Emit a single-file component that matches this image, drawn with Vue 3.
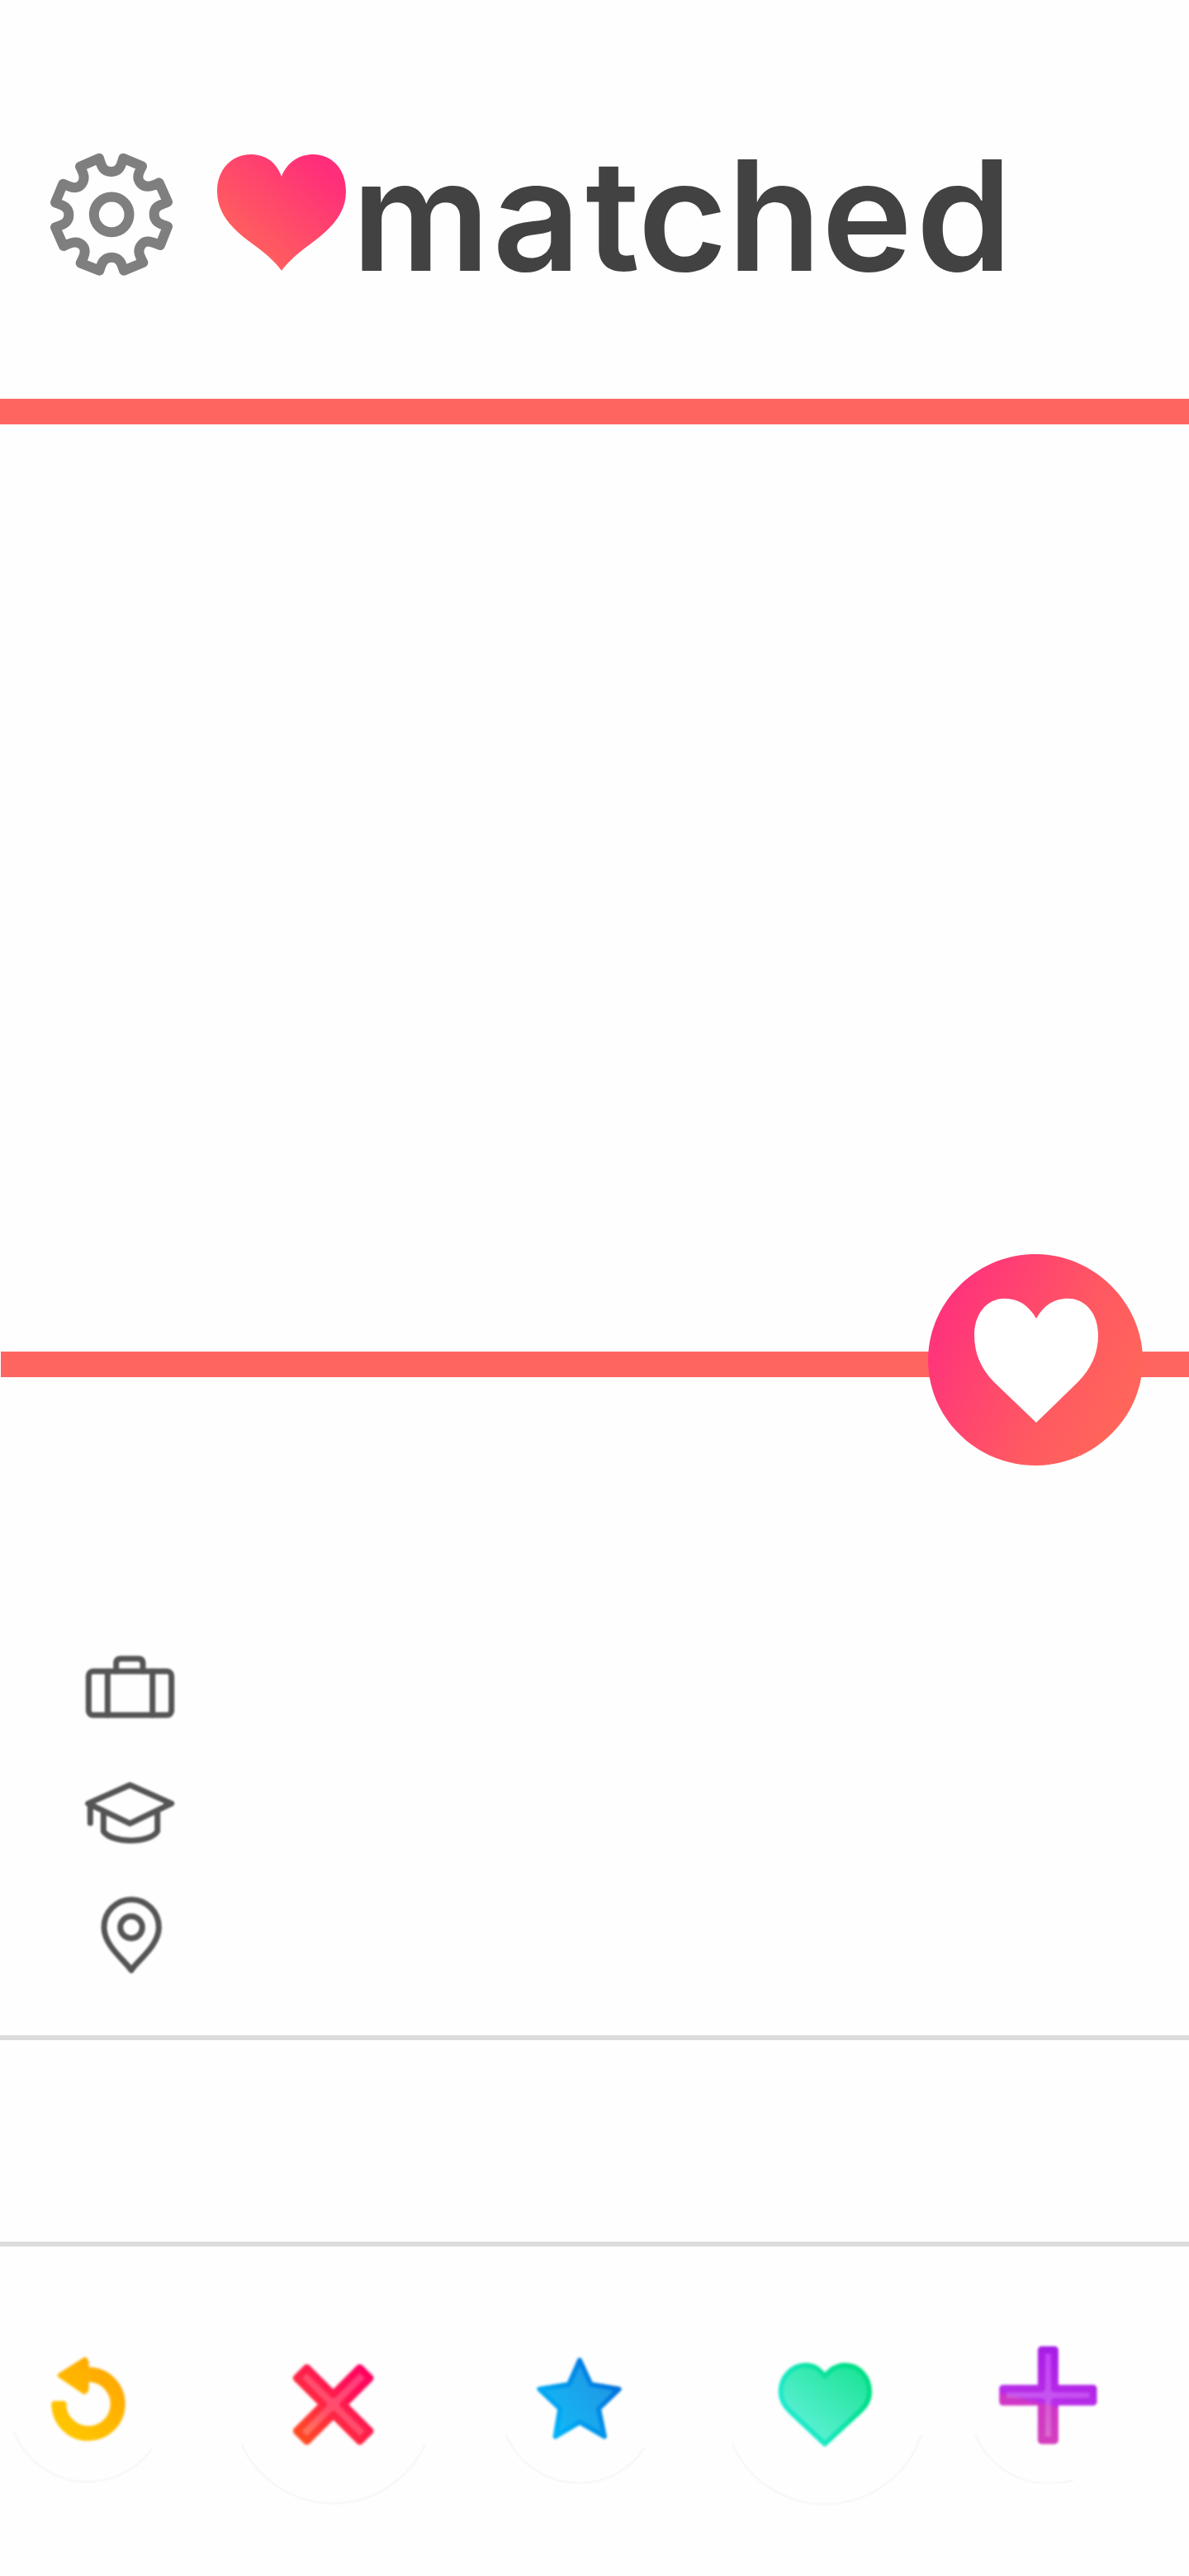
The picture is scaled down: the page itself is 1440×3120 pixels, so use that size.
<script setup>
const logoText = 'matched'
const letterX = '426 596.5 709 772.5 881 995 1109.5'
</script>

<template>
  <main class="screen">
    <header class="header">
      <svg class="gear" viewBox="60 75 450 450" fill="none" stroke="#7f7f7f" stroke-width="36" stroke-linejoin="round">
        <path d="M240 95C248 120 252 144 284 144C316 144 320 120 328 95L396 124C386 145 373 165 391 186C410 206 436 195 458 184L489 254C465 264 440 268 440 298C440 330 465 334 489 343L462 411C440 402 413 388 395 408C376 430 388 450 400 474L330 503C322 480 317 455 286 455C254 455 249 480 241 503L173 476C183 455 197 432 180 412C160 390 133 404 111 414L81 346C105 337 130 332 130 301C130 270 105 265 81 256L109 188C132 198 157 212 176 190C193 168 182 148 171 125Z" />
        <circle cx="285.500" cy="299.500" r="64" />
      </svg>
      <svg class="logo-heart" viewBox="669 80 471 423">
        <defs>
          <linearGradient id="logo-fill" x1="0.25" y1="0.8" x2="0.88" y2="0.15">
            <stop offset="0" stop-color="#ff5f5e" />
            <stop offset="1" stop-color="#ff2d7a" />
          </linearGradient>
        </defs>
        <path fill="url(#logo-fill)" d="M903 160C925 105 970 80 1018 80C1090 82 1137 135 1137 215C1137 290 1090 345 1010 404C958 442 932 466 903 502C875 466 848 442 796 404C720 350 669 292 669 215C669 135 720 82 790 80C845 80 883 108 903 160Z" />
      </svg>
      <svg class="wordmark" viewBox="423 120 817 280">
        <text :x="letterX" y="327.500">{{ logoText }}</text>
      </svg>
    </header>

    <div class="bar"></div>
    <section class="photo"></section>
    <div class="bar bar-lower">
      <svg class="match" viewBox="72 57 780 768">
        <defs>
          <linearGradient id="match-fill" x1="0.08" y1="0.3" x2="0.92" y2="0.7">
            <stop offset="0" stop-color="#ff347a" />
            <stop offset="0.65" stop-color="#ff5962" />
            <stop offset="1" stop-color="#ff655a" />
          </linearGradient>
        </defs>
        <path fill="url(#match-fill)" d="M462 57C675 57 852 235 852 442C852 650 675 825 462 825C245 825 72 650 72 442C72 235 245 57 462 57Z" />
        <path fill="#fff" d="M465 291C493 242 530 218 580 218C645 218 690 275 690 350C690 420 663 474 616 522L465 669L314 524C265 474 240 420 240 350C240 275 285 218 350 218C400 218 437 242 465 291Z" />
      </svg>
    </div>

    <section class="details">
      <svg class="detail" viewBox="60 60 360 270">
        <rect x="82" y="133" width="301" height="159" rx="16" />
        <path d="M151 133V292M314 133V292M182 133V104Q182 87 199 87H262Q279 87 279 104V133" />
      </svg>
      <svg class="detail cap" viewBox="60 510 360 270">
        <path d="M80 613L232 546L383 613L232 686ZM88 615V684M136 645V714C166 759 304 759 332 714V645" />
        <path d="M365 613H382" stroke-width="20" />
      </svg>
      <svg class="detail pin" viewBox="60 90 360 330">
        <path d="M237 379C215 344 138 291 138 223A99.500 101 0 0 1 337 223C337 291 259 344 237 379Z" />
        <circle cx="237" cy="223" r="40" />
      </svg>
    </section>
    <section class="panel"></section>

    <nav class="actions">
      <svg class="action undo" viewBox="33 348 576 576">
        <defs>
          <linearGradient id="undo-fill" gradientUnits="userSpaceOnUse" x1="230" y1="720" x2="410" y2="520">
            <stop offset="0" stop-color="#ffc500" />
            <stop offset="1" stop-color="#ffa800" />
          </linearGradient>
        </defs>
        <path class="ring" d="M50 735A288 288 0 0 0 552 798" />
        <g class="glyph">
          <path d="M214 634A107 107 0 1 0 322 528" fill="none" stroke="url(#undo-fill)" stroke-width="54" />
          <path d="M188 645V634Q188 624 198 624H231Q241 624 241 634V645Z" fill="#ffc200" />
          <path d="M217 531L308 473Q316 477 315 495V567Q317 588 306 592Z" fill="url(#undo-fill)" stroke="url(#undo-fill)" stroke-width="16" stroke-linejoin="round" />
        </g>
      </svg>
      <svg class="action nope" viewBox="0 -93 738 738">
        <defs>
          <linearGradient id="nope-fill" gradientUnits="userSpaceOnUse" x1="-130" y1="0" x2="130" y2="0">
            <stop offset="0" stop-color="#ff705c" />
            <stop offset="0.35" stop-color="#ff5269" />
            <stop offset="1" stop-color="#ff3d7e" />
          </linearGradient>
          <linearGradient id="nope-edge" gradientUnits="userSpaceOnUse" x1="-165" y1="0" x2="165" y2="0">
            <stop offset="0" stop-color="#ff4a24" />
            <stop offset="0.45" stop-color="#ff2346" />
            <stop offset="1" stop-color="#ff0060" />
          </linearGradient>
        </defs>
        <path class="ring" d="M38 423A367 367 0 0 0 704 423" />
        <path class="glyph thick" transform="translate(371 277) rotate(-45)" d="M-26-162H26V-26H162V26H26V162H-26V26H-162V-26H-26Z" fill="url(#nope-fill)" stroke="url(#nope-edge)" />
      </svg>
      <svg class="action star" viewBox="48 -12 576 576">
        <defs>
          <linearGradient id="star-fill" gradientUnits="userSpaceOnUse" x1="230" y1="350" x2="430" y2="180">
            <stop offset="0" stop-color="#12b7f5" />
            <stop offset="1" stop-color="#2098e4" />
          </linearGradient>
          <linearGradient id="star-edge" gradientUnits="userSpaceOnUse" x1="230" y1="350" x2="470" y2="190">
            <stop offset="0" stop-color="#00b2f8" />
            <stop offset="1" stop-color="#006fdb" />
          </linearGradient>
        </defs>
        <path class="ring" d="M68 387A288 288 0 0 0 574 432" />
        <path class="glyph" d="M336 116L377 204L479 221L405 292L426 393L336 341L248 393L265 292L190 221L297 204Z" fill="url(#star-fill)" stroke="url(#star-edge)" />
      </svg>
      <svg class="action like" viewBox="18 -96 744 744">
        <defs>
          <linearGradient id="like-fill" gradientUnits="userSpaceOnUse" x1="320" y1="370" x2="490" y2="150">
            <stop offset="0" stop-color="#58f0d2" />
            <stop offset="1" stop-color="#20e49a" />
          </linearGradient>
          <linearGradient id="like-edge" gradientUnits="userSpaceOnUse" x1="290" y1="330" x2="500" y2="200">
            <stop offset="0" stop-color="#1ceacb" />
            <stop offset="1" stop-color="#00df87" />
          </linearGradient>
        </defs>
        <path class="ring" d="M52 424A370 370 0 0 0 738 388" />
        <path class="glyph" d="M387 174C408 147 430 134 460 134C512 134 549 178 549 230C549 262 535 282 513 303L387 420L262 303C240 282 227 262 227 230C227 178 266 134 318 134C347 134 366 147 387 174Z" fill="url(#like-fill)" stroke="url(#like-edge)" />
      </svg>
      <svg class="action boost" viewBox="42 -12 576 576">
        <defs>
          <linearGradient id="boost-fill" gradientUnits="userSpaceOnUse" x1="388" y1="64" x2="300" y2="424">
            <stop offset="0" stop-color="#c23bfa" />
            <stop offset="0.59" stop-color="#c656ee" />
            <stop offset="0.61" stop-color="#d75ad3" />
            <stop offset="1" stop-color="#da70cd" />
          </linearGradient>
          <linearGradient id="boost-edge" gradientUnits="userSpaceOnUse" x1="388" y1="64" x2="300" y2="424">
            <stop offset="0" stop-color="#a51be2" />
            <stop offset="0.59" stop-color="#b92de8" />
            <stop offset="0.61" stop-color="#cf35c6" />
            <stop offset="1" stop-color="#d43fbd" />
          </linearGradient>
        </defs>
        <path class="ring" d="M64 387A290 290 0 0 0 420 551" />
        <path class="glyph thick" d="M304 79H352V219H492V267H352V407H304V267H164V219H304Z" fill="url(#boost-fill)" stroke="url(#boost-edge)" />
      </svg>
    </nav>
  </main>
</template>

<style>
body {
  margin: 0;
  background: #fefefe;
}
</style>

<style scoped>
.screen {
  width: 1440px;
  height: 3120px;
  display: flex;
  flex-direction: column;
  overflow: hidden;
  background: #fefefe;
}
svg {
  display: block;
  flex: none;
}
.header {
  box-sizing: border-box;
  height: 483px;
  padding: 120px 0 0 60px;
  display: flex;
  align-items: flex-start;
}
.gear {
  width: 150px;
  height: 150px;
  margin-top: 65px;
}
.logo-heart {
  width: 157px;
  height: 141px;
  margin: 66.667px 0 0 53px;
}
.wordmark {
  width: 817px;
  height: 280px;
  margin-left: 3px;
  overflow: visible;
}
.wordmark text {
  font: 600 186px Inter, "Open Sans", sans-serif;
  fill: #424242;
}
.bar {
  height: 30.500px;
  flex: none;
  background: #ff6560;
}
.photo {
  height: 1123.500px;
  flex: none;
}
.bar-lower {
  position: relative;
  margin-left: 1px;
}
.match {
  position: absolute;
  width: 260px;
  height: 256px;
  top: -118px;
  right: 56px;
}
.details {
  box-sizing: border-box;
  height: 803.500px;
  flex: none;
  padding: 332.500px 0 0 100px;
  border-bottom: 6px solid #dcdcdc;
}
.detail {
  width: 120px;
  height: 90px;
  fill: none;
  stroke: #555;
  stroke-width: 21;
  stroke-linejoin: round;
  stroke-linecap: round;
  filter: blur(1.200px);
}
.cap {
  margin-top: 60px;
}
.pin {
  height: 110px;
  margin-top: 50px;
}
.panel {
  height: 244px;
  flex: none;
  border-bottom: 6px solid #dcdcdc;
}
.actions {
  height: 248px;
  padding: 67px 0 0 11px;
  display: flex;
  align-items: center;
}
.action {
  width: 192px;
  height: 192px;
}
.nope {
  width: 246px;
  height: 246px;
  margin-left: 77px;
}
.star {
  margin-left: 80px;
}
.like {
  width: 248px;
  height: 248px;
  margin-left: 78px;
}
.boost {
  margin-left: 50px;
}
.ring {
  fill: none;
  stroke: #f8f8fa;
  stroke-width: 9;
}
.glyph {
  stroke-width: 18;
  stroke-linejoin: round;
  filter: blur(4px);
}
.thick {
  stroke-width: 27;
}
</style>
